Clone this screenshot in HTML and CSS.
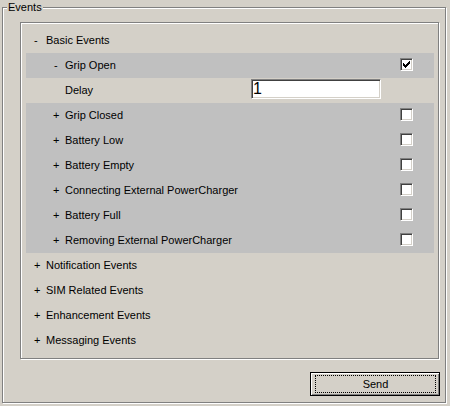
FILE: index.html
```html
<!DOCTYPE html>
<html>
<head>
<meta charset="utf-8">
<link rel="stylesheet" href="styles.css">
</head>
<body>
<div class="group">
  <div class="legend">Events</div>
  <div class="panel">
    <div class="row"><span class="tog">-</span><span class="label">Basic Events</span></div>
    <div class="row sub sel"><span class="tog">-</span><span class="label">Grip Open</span>
      <span class="check on"><svg width="9" height="9" viewBox="0 0 9 9"><path d="M1 3h1v1h1v1h1V4h1V3h1V2h1V1h1v3H7v1H6v1H5v1H4v1H3V7H2V6H1z" fill="#000"/></svg></span></div>
    <div class="row sub"><span class="tog"></span><span class="label fixed">Delay</span><div class="field">1</div></div>
    <div class="row sub sel"><span class="tog plus">+</span><span class="label">Grip Closed</span><span class="check"></span></div>
    <div class="row sub sel"><span class="tog plus">+</span><span class="label">Battery Low</span><span class="check"></span></div>
    <div class="row sub sel"><span class="tog plus">+</span><span class="label">Battery Empty</span><span class="check"></span></div>
    <div class="row sub sel"><span class="tog plus">+</span><span class="label">Connecting External PowerCharger</span><span class="check"></span></div>
    <div class="row sub sel"><span class="tog plus">+</span><span class="label">Battery Full</span><span class="check"></span></div>
    <div class="row sub sel"><span class="tog plus">+</span><span class="label">Removing External PowerCharger</span><span class="check"></span></div>
    <div class="row"><span class="tog">+</span><span class="label">Notification Events</span></div>
    <div class="row"><span class="tog">+</span><span class="label">SIM Related Events</span></div>
    <div class="row"><span class="tog">+</span><span class="label">Enhancement Events</span></div>
    <div class="row"><span class="tog">+</span><span class="label">Messaging Events</span></div>
  </div>
  <div class="footer">
    <button class="btn"><span class="focus">Send</span></button>
  </div>
</div>
</body>
</html>
```
FILE: styles.css
```css
html, body {
  margin: 0;
  padding: 0;
  background: #d4d0c8;
}
body {
  width: 450px;
  height: 406px;
  overflow: hidden;
  font-family: "Liberation Sans", Arial, sans-serif;
  font-size: 11px;
  color: #000;
}
.group {
  position: relative;
  box-sizing: border-box;
  margin: 7px 0 0 2px;
  width: 444px;
  height: 396px;
  border: 1px solid #808080;
  box-shadow: inset 1px 1px 0 #fff, 1px 1px 0 #fff;
  padding: 14px 5px 0 17px;
}
.legend {
  position: absolute;
  left: 4px;
  top: -7px;
  padding: 0 1px;
  line-height: 13px;
  background: #d4d0c8;
}
.panel {
  box-sizing: border-box;
  width: 419px;
  height: 337px;
  border: 1px solid #808080;
  box-shadow: inset 1px 1px 0 #fff, 1px 1px 0 #fff;
  padding: 5px 4px 0 5px;
}
.row {
  box-sizing: border-box;
  display: flex;
  align-items: center;
  height: 25px;
  padding-bottom: 2px;
}
.row.sel {
  background: #c0c0c0;
}
.tog {
  box-sizing: border-box;
  width: 20px;
  padding-left: 8px;
  flex: none;
}
.sub .tog {
  width: 39px;
  padding-left: 28px;
}
.sub .tog.plus {
  padding-left: 27px;
}
.label {
  white-space: nowrap;
}
.label.fixed {
  width: 186px;
  flex: none;
}
.check {
  box-sizing: border-box;
  margin: 0 21px 0 auto;
  width: 13px;
  height: 13px;
  flex: none;
  background: #fff;
  border-top: 1px solid #808080;
  border-left: 1px solid #808080;
  border-bottom: 1px solid #fff;
  border-right: 1px solid #fff;
  box-shadow: inset 1px 1px 0 #404040, inset -1px -1px 0 #d4d0c8;
  padding: 1px;
}
.check svg {
  display: block;
  shape-rendering: crispEdges;
}
.field {
  box-sizing: border-box;
  align-self: flex-start;
  margin-top: 1px;
  width: 130px;
  height: 20px;
  background: #fff;
  border-top: 1px solid #808080;
  border-left: 1px solid #808080;
  border-bottom: 1px solid #fff;
  border-right: 1px solid #fff;
  box-shadow: inset 1px 1px 0 #404040, inset -1px -1px 0 #d4d0c8;
  font-size: 16px;
  line-height: 18px;
  padding-left: 1px;
}
.footer {
  display: flex;
  justify-content: flex-end;
  margin-top: 13px;
}
.btn {
  box-sizing: border-box;
  display: flex;
  width: 130px;
  height: 24px;
  margin: 0;
  padding: 2px 3px 2px 4px;
  border: 1px solid #000;
  background: #d4d0c8;
  box-shadow: inset 1px 1px 0 #fff, inset -1px -1px 0 #808080;
  font-family: "Liberation Sans", Arial, sans-serif;
  font-size: 11px;
  color: #000;
}
.focus {
  flex: 1;
  display: flex;
  align-items: center;
  justify-content: center;
  border: 1px dotted #000;
}
```
